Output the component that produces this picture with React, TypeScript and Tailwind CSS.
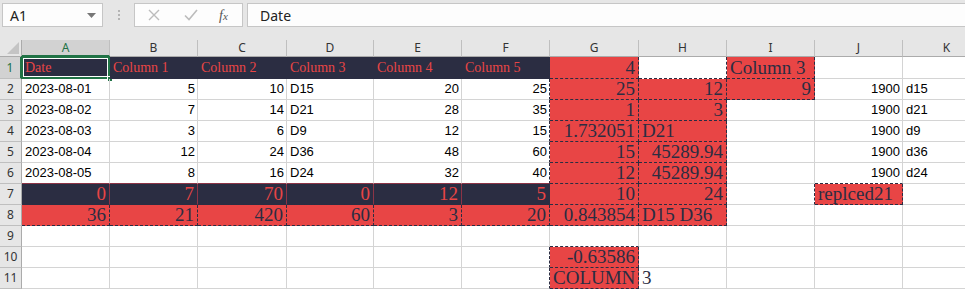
import React from 'react';

type Kind = 'num' | 'txt' | 'hdr' | 'nv' | 'rd' | 'rdL' | 'sf' | '';
type Cell = [Kind, string];

const E: Cell = ['', ''];

const rows: Cell[][] = [
  [['hdr', 'Date'], ['hdr', 'Column 1'], ['hdr', 'Column 2'], ['hdr', 'Column 3'], ['hdr', 'Column 4'], ['hdr', 'Column 5'], ['rd', '4'], E, ['rdL', 'Column 3'], E, E],
  [['txt', '2023-08-01'], ['num', '5'], ['num', '10'], ['txt', 'D15'], ['num', '20'], ['num', '25'], ['rd', '25'], ['rd', '12'], ['rd', '9'], ['num', '1900'], ['txt', 'd15']],
  [['txt', '2023-08-02'], ['num', '7'], ['num', '14'], ['txt', 'D21'], ['num', '28'], ['num', '35'], ['rd', '1'], ['rd', '3'], E, ['num', '1900'], ['txt', 'd21']],
  [['txt', '2023-08-03'], ['num', '3'], ['num', '6'], ['txt', 'D9'], ['num', '12'], ['num', '15'], ['rd', '1.732051'], ['rdL', 'D21'], E, ['num', '1900'], ['txt', 'd9']],
  [['txt', '2023-08-04'], ['num', '12'], ['num', '24'], ['txt', 'D36'], ['num', '48'], ['num', '60'], ['rd', '15'], ['rd', '45289.94'], E, ['num', '1900'], ['txt', 'd36']],
  [['txt', '2023-08-05'], ['num', '8'], ['num', '16'], ['txt', 'D24'], ['num', '32'], ['num', '40'], ['rd', '12'], ['rd', '45289.94'], E, ['num', '1900'], ['txt', 'd24']],
  [['nv', '0'], ['nv', '7'], ['nv', '70'], ['nv', '0'], ['nv', '12'], ['nv', '5'], ['rd', '10'], ['rd', '24'], E, ['rdL', 'replced21'], E],
  [['rd', '36'], ['rd', '21'], ['rd', '420'], ['rd', '60'], ['rd', '3'], ['rd', '20'], ['rd', '0.843854'], ['rdL', 'D15 D36'], E, E, E],
  [E, E, E, E, E, E, E, E, E, E, E],
  [E, E, E, E, E, E, ['rd', '-0.63586'], E, E, E, E],
  [E, E, E, E, E, E, ['rdL', 'COLUMN'], ['sf', '3'], E, E, E],
];

const letters = ['A', 'B', 'C', 'D', 'E', 'F', 'G', 'H', 'I', 'J', 'K'];

const fill = (r: number, c: number) => {
  const k = rows[r]?.[c]?.[0];
  if (k === 'hdr') return 'hdr';
  if (k === 'nv') return 'nv';
  if (k === 'rd' || k === 'rdL') return 'rd';
  return '';
};

const rightEdge = (r: number, c: number) => {
  const a = fill(r, c);
  const b = fill(r, c + 1);
  if (a === 'rd' || b === 'rd') return 'border-r-[#2b2d42] [border-right-style:dashed]';
  if (a === 'nv' || b === 'nv') return 'border-r-[#8c3446]';
  if (a === 'hdr' && b === 'hdr') return 'border-r-[#2b2d42]';
  return 'border-r-[#d4d4d4]';
};

const bottomEdge = (r: number, c: number) => {
  const a = fill(r, c);
  const b = fill(r + 1, c);
  if (a === 'rd' || b === 'rd') return 'border-b-[#2b2d42] [border-bottom-style:dashed]';
  if (a === 'nv' || b === 'nv') return 'border-b-[#8c3446]';
  if (a === 'hdr') return 'border-b-[#2b2d42]';
  return 'border-b-[#d4d4d4]';
};

const textClass: Record<Kind, string> = {
  num: 'justify-end pr-[2px] font-["Liberation_Sans",sans-serif] text-[13px] text-black',
  txt: 'justify-start pl-[3px] font-["Liberation_Sans",sans-serif] text-[13px] text-black',
  hdr: 'justify-start pl-[3px] font-["Liberation_Serif",serif] text-[14px] text-[#e84545] bg-[#2b2d42]',
  nv: 'justify-end pr-[3px] font-["Liberation_Serif",serif] text-[19px] text-[#e84545] bg-[#2b2d42]',
  rd: 'justify-end pr-[3px] font-["Liberation_Serif",serif] text-[19px] text-[#2b2d42] bg-[#e84545]',
  rdL: 'justify-start pl-[3px] font-["Liberation_Serif",serif] text-[19px] text-[#2b2d42] bg-[#e84545]',
  sf: 'justify-start pl-[3px] font-["Liberation_Serif",serif] text-[19px] text-[#2b2d42]',
  '': '',
};

const NameBox = () => (
  <div className="ml-[2px] flex h-[24px] w-[101px] items-center justify-between border border-[#c6c6c6] bg-[#fdfdfd] pl-[7px] pr-[6px]">
    <span className="font-['Noto_Sans',sans-serif] text-[14px] text-[#222]">A1</span>
    <svg width="9" height="5" viewBox="0 0 9 5"><path d="M0 0h9L4.5 5z" fill="#777" /></svg>
  </div>
);

const FormulaBar = () => (
  <div className="flex h-[40px] items-start bg-[#e6e6e6] pt-[3px]">
    <NameBox />
    <div className="flex w-[31px] flex-col items-center gap-[2px] pt-[7px]">
      <div className="h-[2px] w-[2px] bg-[#b4b4b4]" />
      <div className="h-[2px] w-[2px] bg-[#b4b4b4]" />
      <div className="h-[2px] w-[2px] bg-[#b4b4b4]" />
    </div>
    <div className="flex h-[24px] w-[109px] items-center border border-[#c6c6c6] bg-[#fdfdfd]">
      <svg className="ml-[13px]" width="12" height="12" viewBox="0 0 12 12">
        <path d="M1 1l10 10M11 1L1 11" stroke="#bcbcbc" strokeWidth="1.4" />
      </svg>
      <svg className="ml-[24px]" width="14" height="12" viewBox="0 0 14 12">
        <path d="M1 6.5l4 4L13 1" stroke="#bcbcbc" strokeWidth="1.6" fill="none" />
      </svg>
      <span className="ml-[21px] font-['Liberation_Serif',serif] text-[14px] italic text-[#555]">f<span className="text-[11px]">x</span></span>
    </div>
    <div className="ml-[4px] flex h-[24px] flex-1 items-center border border-r-0 border-[#c6c6c6] bg-[#fdfdfd] pl-[12px]">
      <span className="font-['Noto_Sans',sans-serif] text-[14px] text-[#222]">Date</span>
    </div>
  </div>
);

export default function App() {
  return (
    <div className="h-[290px] w-[965px] overflow-hidden bg-white">
      <FormulaBar />
      <div className="grid grid-cols-[22px_88px_88px_89px_87px_88px_88px_89px_88px_88px_88px_88px] grid-rows-[17px_22px_repeat(10,21px)]">
        {/* corner with select-all triangle */}
        <div className="flex items-end justify-end border-r border-b border-[#ababab] bg-[#e6e6e6] pb-[2px] pr-[2px]">
          <svg width="12" height="12" viewBox="0 0 12 12"><path d="M12 0V12H0z" fill="#c4c4c4" /></svg>
        </div>
        {letters.map((l, i) => (
          <div
            key={l}
            className={
              i === 0
                ? 'flex items-center justify-center border-r border-b-2 border-r-[#bfbfbf] border-b-[#217346] bg-[#d2d2d2] font-["Noto_Sans",sans-serif] text-[12px] text-[#217346]'
                : 'flex items-center justify-center border-r border-b border-r-[#bfbfbf] border-b-[#ababab] bg-[#e6e6e6] font-["Noto_Sans",sans-serif] text-[12px] text-[#333]'
            }
          >
            {l}
          </div>
        ))}
        {rows.map((row, r) => (
          <React.Fragment key={r}>
            <div
              className={
                r === 0
                  ? 'flex items-center justify-center border-r-2 border-b border-r-[#217346] border-b-[#bfbfbf] bg-[#d2d2d2] font-["Noto_Sans",sans-serif] text-[12px] text-[#217346]'
                  : 'flex items-center justify-center border-r border-b border-r-[#ababab] border-b-[#bfbfbf] bg-[#e6e6e6] font-["Noto_Sans",sans-serif] text-[12px] text-[#333]'
              }
            >
              {r + 1}
            </div>
            {row.map(([kind, v], c) => (
              <div
                key={c}
                className={`relative flex items-center overflow-visible whitespace-nowrap border-r border-b leading-[20px] ${rightEdge(r, c)} ${bottomEdge(r, c)} ${textClass[kind]}`}
              >
                {v}
                {r === 0 && c === 0 && (
                  <>
                    <div className="pointer-events-none absolute -left-[1px] -top-[1px] -right-[1px] -bottom-[1px] border-2 border-[#217346]">
                      <div className="h-full w-full border border-white" />
                    </div>
                    <div className="absolute -bottom-[4px] -right-[4px] h-[6px] w-[6px] border border-white bg-[#217346]" />
                  </>
                )}
              </div>
            ))}
          </React.Fragment>
        ))}
      </div>
    </div>
  );
}
